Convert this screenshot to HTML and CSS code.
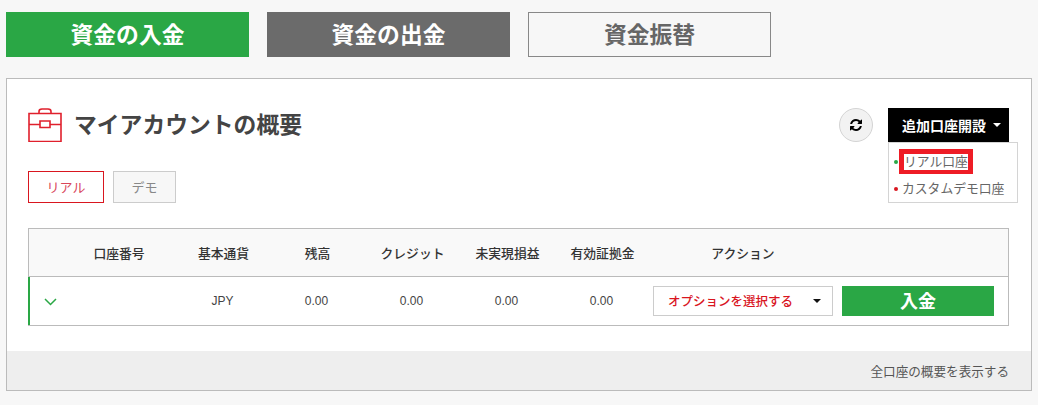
FILE: index.html
```html
<!DOCTYPE html>
<html lang="ja">
<head>
<meta charset="utf-8">
<title>マイアカウントの概要</title>
<link rel="stylesheet" href="styles.css">
</head>
<body>
<nav class="funds">
  <a class="fund fund-green">資金の入金</a>
  <a class="fund fund-grey">資金の出金</a>
  <a class="fund fund-outline">資金振替</a>
</nav>
<section class="panel">
  <div class="panel-body">
    <header class="head">
      <svg class="case" viewBox="0 0 34 34" fill="none" stroke="#e0202c" stroke-width="1.6">
        <path d="M1 5.5h32v28H1z"/>
        <path d="M1 16.5h11M22 16.5h11"/>
        <path d="M12 13h10v6.500H12z"/>
        <path d="M11 5.500V3.500Q11 1 14 1h6q3 0 3 2.500v2"/>
      </svg>
      <h1 class="title">マイアカウントの概要</h1>
      <button class="refresh" aria-label="更新">
        <svg viewBox="0 0 1536 1536" width="12" height="12"><path fill="#000" d="M1511 928q0 5-1 7-64 268-268 434.500t-478 166.500q-146 0-282.500-55t-243.500-157l-129 129q-19 19-45 19t-45-19-19-45v-448q0-26 19-45t45-19h448q26 0 45 19t19 45-19 45l-137 137q71 66 161 102t187 36q134 0 250-65t186-179q11-17 53-117 8-23 30-23h192q13 0 22.500 9.500t9.500 22.500zm25-800v448q0 26-19 45t-45 19h-448q-26 0-45-19t-19-45 19-45l138-138q-148-137-349-137-134 0-250 65t-186 179q-11 17-53 117-8 23-30 23h-199q-13 0-22.500-9.500t-9.500-22.500v-7q65-268 270-434.500t480-166.500q146 0 284 55.500t245 156.500l130-129q19-19 45-19t45 19 19 45z"/></svg>
      </button>
      <div class="open">
        <button class="open-btn">追加口座開設<span class="caret"></span></button>
        <ul class="menu">
          <li class="menu-item dot-green"><span class="hl">リアル口座</span></li>
          <li class="menu-item dot-red">カスタムデモ口座</li>
        </ul>
      </div>
    </header>
    <div class="tabs">
      <a class="tab tab-on">リアル</a>
      <a class="tab tab-off">デモ</a>
    </div>
    <div class="table">
      <div class="row row-head">
        <div></div>
        <div class="cell c-id">口座番号</div>
        <div class="cell c-cur">基本通貨</div>
        <div class="cell">残高</div>
        <div class="cell">クレジット</div>
        <div class="cell">未実現損益</div>
        <div class="cell">有効証拠金</div>
        <div class="cell c-action"><span class="action-label">アクション</span></div>
      </div>
      <div class="row row-data">
        <div class="cell-chev">
          <svg width="13" height="8" viewBox="0 0 13 8" fill="none" stroke="#2aa745" stroke-width="1.500"><path d="M1 1l5.500 5.500L12 1"/></svg>
        </div>
        <div class="cell c-id"></div>
        <div class="cell">JPY</div>
        <div class="cell num">0.00</div>
        <div class="cell num">0.00</div>
        <div class="cell num">0.00</div>
        <div class="cell num">0.00</div>
        <div class="c-action actions">
          <div class="select">オプションを選択する<span class="caret caret-dark"></span></div>
          <a class="deposit">入金</a>
        </div>
      </div>
    </div>
  </div>
  <footer class="foot">全口座の概要を表示する</footer>
</section>
</body>
</html>
```
FILE: styles.css
```css
* { box-sizing: border-box; }
html, body { margin: 0; }
body {
  background: #f7f7f7;
  padding: 12px 6px 0;
  font-family: "Liberation Sans", "Noto Sans CJK JP", sans-serif;
  color: #444;
}
.funds { display: flex; gap: 18px; }
.fund {
  width: 243px;
  height: 45px;
  display: flex;
  align-items: center;
  justify-content: center;
  padding-bottom: 2px;
  font-size: 22.800px;
  font-weight: 700;
}
.fund-green { background: #2aa745; color: #fff; }
.fund-grey { background: #6b6b6b; color: #fff; }
.fund-outline { background: #f7f7f7; color: #666; border: 1px solid #888; }

.panel {
  margin-top: 21px;
  width: 1026px;
  height: 313px;
  border: 1px solid #bbb;
  background: #fff;
  display: flex;
  flex-direction: column;
}
.panel-body { flex: 1; padding: 29px 22px 0 21px; }
.head { display: flex; align-items: center; height: 34px; }
.case { width: 34px; height: 34px; flex: none; }
.title {
  margin: 0 0 0 12px;
  flex: 1;
  font-size: 22.800px;
  font-weight: 700;
  color: #444;
  line-height: 34px;
}
.refresh {
  width: 34px;
  height: 34px;
  border-radius: 50%;
  border: 1px solid #d4d4d4;
  background: #f2f2f2;
  padding: 0;
  display: flex;
  align-items: center;
  justify-content: center;
  margin-right: 15px;
}
.open { position: relative; width: 121px; height: 34px; }
.open-btn {
  width: 100%;
  height: 34px;
  border: 0;
  background: #000;
  color: #fff;
  font: 700 14px "Liberation Sans", "Noto Sans CJK JP", sans-serif;
  padding: 0 0 1px 14px;
  display: flex;
  align-items: center;
}
.caret {
  width: 0;
  height: 0;
  margin-left: 7px;
  border-left: 4px solid transparent;
  border-right: 4px solid transparent;
  border-top: 4px solid #fff;
}
.menu {
  position: absolute;
  left: 0;
  top: 34px;
  width: 130px;
  height: 61px;
  margin: 0;
  padding: 4px 0 0;
  list-style: none;
  background: #fff;
  border: 1px solid #d4d4d4;
  z-index: 2;
}
.menu-item {
  position: relative;
  height: 27px;
  display: flex;
  align-items: center;
  padding-left: 13px;
  font-size: 12.800px;
  color: #666;
  white-space: nowrap;
}
.menu-item::before {
  content: "";
  position: absolute;
  left: 5px;
  top: 13px;
  width: 4px;
  height: 4px;
  border-radius: 50%;
}
.dot-green::before { background: #2aa745; }
.dot-red::before { background: #d9161f; }
.hl {
  border: solid #ee1c25;
  border-width: 5px 5px 4px;
  margin: 2px 0 0 -3px;
  line-height: 16px;
}

.tabs { display: flex; gap: 9px; margin-top: 29px; }
.tab {
  height: 32px;
  display: flex;
  align-items: center;
  justify-content: center;
  padding-bottom: 2px;
  font-size: 13px;
}
.tab-on { width: 76px; border: 1px solid #d9161f; color: #d9465a; background: #fff; }
.tab-off { width: 63px; border: 1px solid #ccc; color: #888; background: #f7f7f7; }

.table { margin-top: 25px; width: 981px; border: 1px solid #bbb; }
.row {
  display: grid;
  grid-template-columns: 42px 104px repeat(5, 95px) 1fr;
  align-items: center;
}
.row-head {
  height: 48px;
  background: #f9f9f9;
  border-bottom: 1px solid #bbb;
  padding-bottom: 1px;
  font-size: 12.800px;
  font-weight: 500;
  color: #333;
}
.row-data { height: 48px; font-size: 12px; color: #444; box-shadow: -1px 0 0 #2aa745, inset 1px 0 0 #2aa745; }
.cell { text-align: center; white-space: nowrap; }
.c-id { padding-right: 8px; }
.c-cur { padding-left: 2px; }
.num { padding-right: 2px; }
.cell-chev { display: flex; padding: 1px 0 0 15px; }
.c-action { padding-left: 3px; }
.action-label { display: block; width: 180px; text-align: center; }
.actions { display: flex; gap: 9px; align-items: center; }
.select {
  width: 180px;
  height: 30px;
  border: 1px solid #ccc;
  display: flex;
  align-items: center;
  padding: 0 0 1px 14px;
  font-size: 12.500px;
  font-weight: 500;
  color: #d9161f;
  white-space: nowrap;
}
.caret-dark { margin-left: 20px; border-top-color: #111; }
.deposit {
  width: 152px;
  height: 30px;
  background: #2aa745;
  color: #fff;
  font-size: 18px;
  font-weight: 700;
  display: flex;
  align-items: center;
  justify-content: center;
  padding-bottom: 2px;
}
.foot {
  height: 39px;
  background: #eee;
  display: flex;
  align-items: center;
  justify-content: flex-end;
  padding-right: 22px;
  font-size: 12.600px;
  color: #555;
}
```
